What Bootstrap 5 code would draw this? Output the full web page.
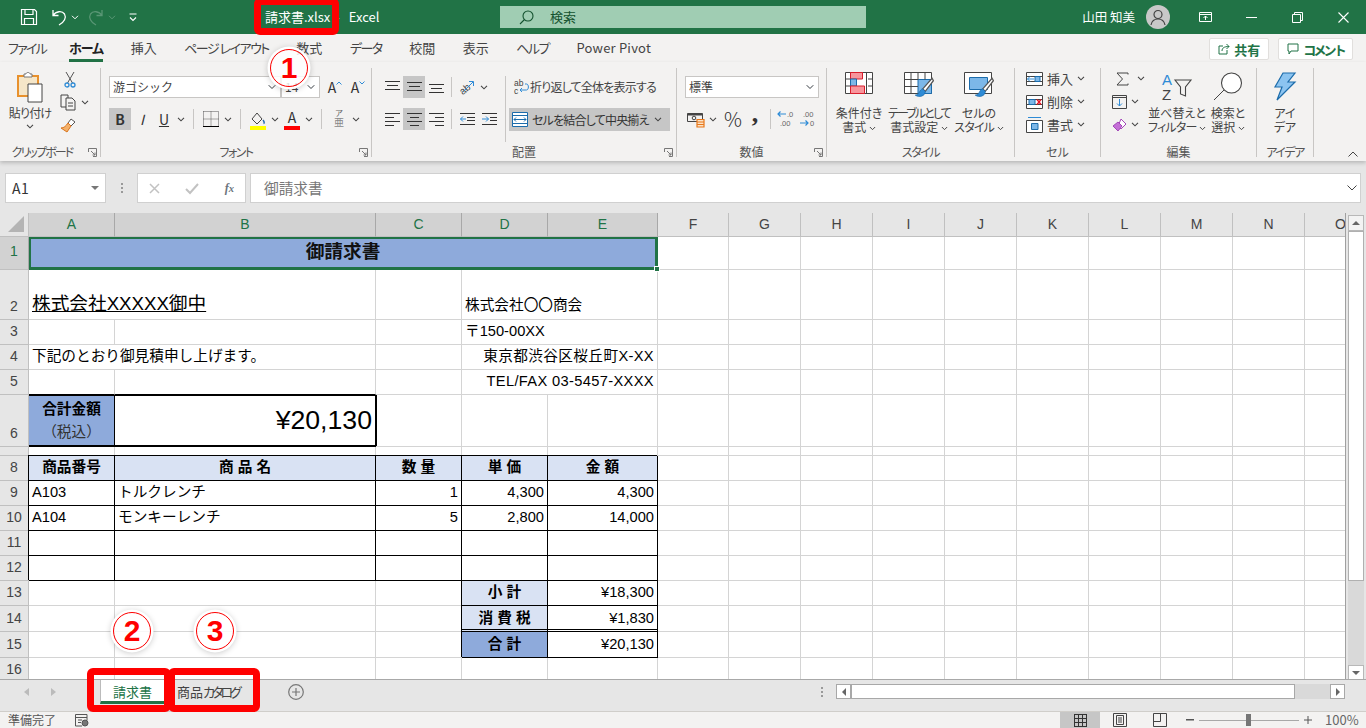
<!DOCTYPE html>
<html lang="ja">

<head>
    <meta charset="UTF-8">
    <title>請求書.xlsx - Excel</title>
    <link href="https://cdn.jsdelivr.net/npm/bootstrap@5.3.3/dist/css/bootstrap.min.css" rel="stylesheet">
    <style>
        html, body { height: 728px; overflow: hidden; }
        body { font-family: "Noto Sans CJK JP", "Liberation Sans", sans-serif; font-size: 12px; color: #444; background: #e6e6e6; }
        svg { display: block; flex-shrink: 0; overflow: visible; }
        .app { width: 1366px; height: 728px; overflow: hidden; font-feature-settings: "palt"; }
        .kana { letter-spacing: -1.5px; }
        .kana-s { letter-spacing: -.8px; }
        .kana-l { letter-spacing: -1.9px; }

        /* title bar */
        .xl-title { height: 34px; background: #217346; color: #fff; font-size: 13px; flex-shrink: 0; }
        .qat { width: 254px; flex-shrink: 0; padding-left: 20px; gap: 9px; }
        .qat-chev { margin-left: -5px; }
        .doc-name { width: 246px; flex-shrink: 0; padding-left: 11px; font-feature-settings: normal; }
        .doc-dash { margin: 0 6px 0 2px; opacity: .7; }
        .xl-search { width: 366px; height: 22px; background: #a0cdb3; color: #14522f; padding-left: 19px; gap: 16px; }
        .xl-user { font-size: 12.5px; margin-left: auto; }
        .xl-avatar { width: 24px; height: 24px; border-radius: 50%; background: #c8c8c8; margin: 0 12px 0 11px; overflow: hidden; }
        .win-btn { width: 46px; height: 34px; }

        /* ribbon */
        .tab-row { height: 28px; background: #f3f2f1; padding-left: 8px; gap: 27.5px; font-size: 13px; flex-shrink: 0; }
        .rb-tab { height: 28px; line-height: 28px; white-space: nowrap; }
        .tab-first { margin-right: -4.5px; letter-spacing: -1.75px; }
        .tab-pp { letter-spacing: .2px; }
        .rb-tab-on { font-weight: 700; color: #222; border-bottom: 3px solid #217346; letter-spacing: -1px; }
        .rb-share { height: 22px; padding: 0 8px; font-size: 13px; font-weight: 700; color: #217346; background: #fff; border: 1px solid #e1dfdd; border-radius: 2px; gap: 4px; line-height: 1; }
        .share-kana { letter-spacing: -2.8px; }
        .share-wrap { margin-left: auto; margin-right: 13px; gap: 9px; }
        .ribbon { height: 99px; background: #f3f2f1; padding-top: 6px; position: relative; z-index: 2; box-shadow: 0 2px 4px rgba(0, 0, 0, .2); flex-shrink: 0; }
        .rb-group { height: 89px; border-right: 1px solid #c8c6c4; position: relative; flex-shrink: 0; }
        .g-clip { width: 101px; } .g-font { width: 271px; } .g-align { width: 305px; } .g-num { width: 150px; }
        .g-style { width: 188px; } .g-cell { width: 86px; } .g-edit { width: 156px; } .g-idea { width: 57px; }
        .rb-body { height: 73px; }
        .rb-label { position: absolute; left: 0; right: 0; bottom: -3px; height: 16px; line-height: 16px; text-align: center; color: #555; }
        .label-clip { padding-right: 16px; }
        .launch { position: absolute; right: 3px; bottom: 0; }
        .rows { padding-top: 8px; gap: 10px; }
        .rb-row { height: 22px; }
        .ib { width: 22px; height: 22px; flex-shrink: 0; font-size: 14px; color: #333; }
        .ib-on { background: #c6c6c6; }
        .cv { width: 12px; height: 22px; flex-shrink: 0; }
        .rb-sep { width: 1px; height: 20px; background: #c8c6c4; margin: 1px 6px; flex-shrink: 0; }
        .sep-tight { margin: 1px 4px; }
        .xl-select { height: 22px; padding: 0 16px 0 3px; font-size: 12px; line-height: 20px; color: #444; border: 1px solid #c8c6c4; border-radius: 0; background-position: right 3px center; background-size: 10px 8px; box-shadow: none; }
        .sel-font { width: 172px; margin-left: 8px; }
        .sel-size { width: 39px; margin-left: 0; }
        .sel-num { width: 134px; }
        .grow-a { margin-left: 1px; }
        .grow-a svg { margin-bottom: 9px; }
        .big-btn { line-height: 14px; text-align: center; flex-shrink: 0; padding-top: 4px; white-space: nowrap; }
        .big-ico { height: 34px; }
        .small-col { width: 44px; }
        .small-row { height: 23px; }
        .cell-stack { margin-top: -1px; }
        .cell-row { height: 23px; padding-left: 11px; gap: 4px; font-size: 13px; white-space: nowrap; }
        .align-body { padding-left: 9px; }
        .align-left { width: 124px; }
        .wrap-row { gap: 1px; padding-left: 5px; color: #444; }
        .merge-btn { width: 161px; height: 23px; background: #c6c6c6; padding-left: 3px; gap: 4px; color: #333; }
        .g-rule { width: 1px; height: 66px; background: #c8c6c4; margin: 8px 3px 0 0; }
        .bar-a { line-height: 15px; font-size: 14px; text-align: center; }
        .bar-c { width: 16px; height: 4px; margin-top: 1px; }
        .bar-y { background: #ff0; } .bar-r { background: #f00; }
        .ruby-a { font-size: 8px; line-height: 9px; text-align: center; color: #666; }
        .ruby-b { font-size: 10px; line-height: 10px; text-align: center; color: #888; }
        .pct-glyph { font-size: 20px; font-weight: 300; margin-left: 3px; }
        .comma-glyph { font: 700 26px/14px "Liberation Serif", serif; padding-bottom: 10px; }

        /* formula bar */
        .fx-area { height: 52px; background: #e6e6e6; padding: 12px 5px 10px; flex-shrink: 0; }
        .fx-box { height: 30px; background: #fff; border: 1px solid #d0d0d0; }
        .fx-name { width: 101px; padding: 0 6px; font-size: 14px; color: #333; letter-spacing: .5px; font-feature-settings: normal; }
        .fx-dots { width: 31px; }
        .fx-btns { width: 109px; padding: 0 11px; }
        .fx-mark { font-family: "Liberation Serif", serif; }
        .fx-input { margin-left: 4px; flex: 1; padding: 0 3px 0 13px; color: #777; font-size: 14.67px; font-feature-settings: normal; }

        /* sheet */
        .sheet-area { height: 466px; flex-shrink: 0; }
        .sheet-clip { width: 1346px; height: 466px; overflow: hidden; background: #fff; border-right: 1px solid #a0a0a0; flex-shrink: 0; }
        .sheet { table-layout: fixed; width: 1377px; border-collapse: separate; border-spacing: 0; color: #000; font-family: "Liberation Sans", "Noto Sans CJK JP", sans-serif; font-size: 14.67px; font-feature-settings: normal; }
        .sheet td, .sheet th { border-right: 1px solid #d4d4d4; border-bottom: 1px solid #d4d4d4; padding: 0 3px 4px; line-height: 18px; white-space: nowrap; overflow: hidden; vertical-align: bottom; font-weight: 400; }
        .col-h { width: 29px; } .col-a { width: 86px; } .col-b { width: 261px; } .col-c { width: 86px; }
        .col-d { width: 86px; } .col-e { width: 110px; } .col-f { width: 71px; } .col-g { width: 72px; }
        .sheet th.hd { background: #e6e6e6; color: #444; text-align: center; font-size: 14px; padding: 0 0 4px; border-right-color: #c0c0c0; border-bottom-color: #c0c0c0; }
        .sheet th.hd-on { background: #d2d2d2; color: #217346; border-right-color: #a8a8a8; vertical-align: middle; }
        .sheet th.hd-corner { position: relative; }
        .sheet th.hd-col { vertical-align: middle; color: #444; padding-bottom: 2px; }
        .sheet th.hd-on.hd-col { color: #217346; }
        .r0 { height: 24px; } .r1 { height: 33px; } .r2 { height: 50px; } .r25 { height: 25px; } .r26 { height: 26px; } .r6 { height: 52px; } .r7 { height: 9px; }
        .sheet .r7 td, .sheet .r7 th { line-height: 0; padding: 0; }
        .sheet .r2 td.pad-up { padding-bottom: 5px; }
        .sheet td.title-cell { background: #8eaadb; font-size: 18.67px; font-weight: 700; text-align: center; vertical-align: middle; position: relative; box-shadow: inset 0 0 0 2px #217346; overflow: visible; border-color: #217346; color: #111; padding: 0 0 3px; }
        .fill-handle { position: absolute; right: -3px; bottom: -3px; width: 6px; height: 6px; background: #217346; border: 1px solid #fff; z-index: 2; }
        .big-name { font-size: 18.67px; text-decoration: underline; text-decoration-thickness: 1px; }
        .addr { letter-spacing: .35px; }
        .sheet td.bk { border-right-color: #000; border-bottom-color: #000; box-shadow: -1px -1px 0 #000; }
        .sheet td.bb { border-bottom-color: #000; }
        .sheet td.fill-l { background: #d9e2f3; font-weight: 700; text-align: center; }
        .sheet td.fill-d { background: #8eaadb; font-weight: 700; text-align: center; }
        .sheet td.dbl { border-bottom: 3px double #000; padding-bottom: 2px; }
        .sheet td.box-l { border-top: 1px solid #000; border-bottom: 2px solid #000; border-right-color: #000; line-height: 23px; padding-bottom: 1px; }
        .sheet td.box-r { border-top: 1px solid #000; border-bottom: 2px solid #000; border-right-color: #000; box-shadow: 1px 0 0 #000; font-size: 26.67px; line-height: 30px; vertical-align: middle; padding-bottom: 1px; }
        .soft-txt { font-weight: 400; color: #333; }

        /* scrollbars */
        .vscroll { width: 20px; padding: 2px 2px 0; }
        .vs-btn { height: 16px; background: #f3f3f3; border: 1px solid #b8b8b8; }
        .vs-btn-dn { background: #fff; }
        .vs-thumb { height: 350px; background: #fff; border: 1px solid #b0b0b0; }
        .vs-track { height: 84px; background: #d9d9d9; }

        /* sheet tabs */
        .tabs-bar { height: 33px; background: #e6e6e6; padding-left: 24px; border-top: 1px solid #a8a8a8; flex-shrink: 0; }
        .tab-nav { width: 76px; gap: 22px; height: 24px; }
        .sh-tab { height: 24px; width: 65px; text-align: center; line-height: 24px; font-size: 13px; }
        .sh-tab-on { background: #fff; color: #217346; border-left: 1px solid #bbb; border-right: 1px solid #bbb; border-bottom: 3px solid #217346; }
        .sh-tab-off { margin-left: 12px; width: 64px; color: #444; white-space: nowrap; text-align: left; }
        .tab-kana { letter-spacing: -3px; }
        .tab-add { margin-left: 47px; }
        .hs { margin-left: auto; margin-right: 21px; }
        .hs-dots { margin-right: 13px; }
        .hs-btn { width: 15px; height: 15px; background: #fff; border: 1px solid #a8a8a8; }
        .hs-thumb { width: 444px; height: 15px; background: #fff; border: 1px solid #a8a8a8; }
        .hs-track { width: 35px; height: 15px; background: #d9d9d9; }

        /* status bar */
        .status { height: 17px; background: #f3f2f1; padding-left: 8px; line-height: 16px; color: #555; flex-shrink: 0; border-top: 1px solid #d0ceca; position: relative; margin-top: -1px; }
        .macro-ico { margin-left: 19px; }
        .st-view { width: 40px; height: 17px; }
        .st-view-on { background: #c6c6c6; }
        .st-right { margin-left: auto; margin-right: 8px; }
        .st-minus { margin-left: 6px; }
        .st-zoom { width: 100px; height: 1px; background: #a8a8a8; margin: 0 5px; position: relative; }
        .st-knob { position: absolute; left: 47px; top: -6px; width: 5px; height: 12px; background: #767676; }
        .st-pct { width: 46px; padding-left: 13px; font-size: 13px; color: #666; }

        /* red marks laid over the screenshot */
        .mark-box { position: absolute; border: 7px solid #f00; border-radius: 6px; z-index: 5; }
        .mark-t { left: 254px; top: -2px; width: 85px; height: 37px; }
        .mark-s1 { left: 87px; top: 668px; width: 84px; height: 44px; }
        .mark-s2 { left: 168px; top: 668px; width: 92px; height: 44px; }
        .mark-num { position: absolute; width: 38px; height: 38px; border-radius: 50%; border: 1.5px solid #f00; background: rgba(255, 255, 255, .82); box-shadow: 0 0 0 2.5px #fff, 0 1px 6px 2px rgba(0, 0, 0, .22); color: #f00; font: 700 30px/35px "Liberation Sans", sans-serif; text-align: center; z-index: 6; }
        .mn-1 { left: 270px; top: 49px; }
        .mn-2 { left: 113px; top: 612px; }
        .mn-3 { left: 196px; top: 612px; }
    </style>
</head>

<body>
    <svg width="0" height="0" class="position-absolute">
        <symbol id="chev" viewBox="0 0 8 5"><path d="M1 .8 4 3.8 7 .8" fill="none" stroke="#444" stroke-width="1.1" /></symbol>
        <symbol id="launch" viewBox="0 0 9 9"><path d="M.5 4V.5H8.5V8.5H5M3 3 7 7M4.500 7H7V4.500" fill="none" stroke="#777" /></symbol>
        <symbol id="brush" viewBox="0 0 16 16"><path d="M14.500 1 7 9.500 9 11.500 15.500 3z" fill="#fff" stroke="#555" /><path d="M7 9.500C4 10 5 14 1 14.500 4 16.500 9 15.500 9 11.500z" fill="#2e8bd6" stroke="#1c6cab" stroke-width=".6" /></symbol>
    </svg>

    <div class="app d-flex flex-column position-relative">
        <!-- title bar -->
        <div class="xl-title d-flex align-items-center">
            <div class="qat d-flex align-items-center">
                <svg class="me-1" width="18" height="18" viewBox="0 0 18 18" fill="none" stroke="#fff" stroke-width="1.200"><path d="M1.500 1.500H14.500L16.500 3.500V16.500H1.500zM5 1.500V6.500H13V1.500M4.500 16.500V10.500H13.500V16.500" /></svg>
                <svg width="16" height="17" viewBox="0 0 16 17" fill="none" stroke="#fff" stroke-width="1.300"><path d="M2 1V6.500H7.500M2 6.500C5 2 11 1.500 13.500 5 15.500 8.500 13.500 13 8 16" /></svg>
                <svg class="qat-chev" width="8" height="5"><path d="M1 .8 4 3.800 7 .8" fill="none" stroke="#fff" /></svg>
                <svg class="opacity-25" width="16" height="17" viewBox="0 0 16 17" fill="none" stroke="#fff" stroke-width="1.300"><path d="M14 1V6.500H8.500M14 6.500C11 2 5 1.500 2.500 5 .5 8.500 2.500 13 8 16" /></svg>
                <svg class="qat-chev opacity-25" width="8" height="5"><path d="M1 .8 4 3.800 7 .8" fill="none" stroke="#fff" /></svg>
                <svg class="ms-1" width="8" height="9" viewBox="0 0 8 9" fill="none" stroke="#fff" stroke-width="1.100"><path d="M.5 1H7.500M1 4.500 4 7.500 7 4.500" /></svg>
            </div>
            <div class="doc-name text-nowrap">請求書.xlsx<span class="doc-dash"> - </span>Excel</div>
            <div class="xl-search d-flex align-items-center">
                <svg width="15" height="15" viewBox="0 0 15 15" fill="none" stroke="#14522f" stroke-width="1.100"><circle cx="9" cy="6" r="5" /><path d="M5.500 9.500 1 14" /></svg>
                <span>検索</span>
            </div>
            <span class="xl-user">山田 知美</span>
            <div class="xl-avatar d-flex justify-content-center align-items-center">
                <svg width="16" height="17" viewBox="0 0 16 17" fill="none" stroke="#444" stroke-width="1.200"><circle cx="8" cy="5.500" r="4" /><path d="M1 16C2 11 5 10 8 10S14 11 15 16" /></svg>
            </div>
            <div class="win-btn d-flex justify-content-center align-items-center">
                <svg width="13" height="10" viewBox="0 0 13 10" fill="none" stroke="#fff"><path d="M.5.5H12.500V9.500H.5zM.5 2.500H12.500M6.500 8V4M4.500 6 6.500 4 8.500 6" /></svg>
            </div>
            <div class="win-btn d-flex justify-content-center align-items-center">
                <svg width="11" height="1"><rect width="11" height="1" fill="#fff" /></svg>
            </div>
            <div class="win-btn d-flex justify-content-center align-items-center">
                <svg width="11" height="11" viewBox="0 0 11 11" fill="none" stroke="#fff"><path d="M.5 2.500H8.500V10.500H.5zM2.500 2.500V.5H10.500V8.500H8.500" /></svg>
            </div>
            <div class="win-btn d-flex justify-content-center align-items-center">
                <svg width="11" height="11" viewBox="0 0 11 11" fill="none" stroke="#fff" stroke-width="1.100"><path d="M.5.5 10.500 10.500M10.500.5.5 10.500" /></svg>
            </div>
        </div>

        <!-- ribbon tabs -->
        <div class="tab-row d-flex align-items-start">
            <span class="rb-tab tab-first">ファイル</span>
            <span class="rb-tab rb-tab-on">ホーム</span>
            <span class="rb-tab">挿入</span>
            <span class="rb-tab kana">ページ レイアウト</span>
            <span class="rb-tab">数式</span>
            <span class="rb-tab kana">データ</span>
            <span class="rb-tab">校閲</span>
            <span class="rb-tab">表示</span>
            <span class="rb-tab kana">ヘルプ</span>
            <span class="rb-tab tab-pp">Power Pivot</span>
            <div class="share-wrap d-flex align-items-center mt-1">
                <button class="btn rb-share d-flex align-items-center">
                    <svg width="12" height="12" viewBox="0 0 12 12" fill="none" stroke="#217346"><path d="M5 3H1V11H9V7M4 8C4 5 6 3.500 11 3.500M8.500 1 11 3.500 8.500 6" /></svg>共有
                </button>
                <button class="btn rb-share d-flex align-items-center">
                    <svg width="12" height="12" viewBox="0 0 12 12" fill="none" stroke="#217346"><path d="M1 1H11V8H4L2 11V8H1z" /></svg><span class="share-kana">コメント</span>
                </button>
            </div>
        </div>

        <!-- ribbon -->
        <div class="ribbon d-flex">
            <div class="rb-group g-clip">
                <div class="rb-body d-flex">
                    <div class="big-btn ms-2 kana-s" style="width:44px">
                        <div class="big-ico d-flex justify-content-center">
                            <svg width="28" height="32" viewBox="0 0 28 32"><path d="M2 4H22V24H2z" fill="#f5e6c8" stroke="#e8912d" stroke-width="2" /><path d="M8 4V2H10C10 0 14 0 14 2H16V5H8z" fill="#fff" stroke="#777" /><path d="M12 12H26V30H12z" fill="#fff" stroke="#444" /></svg>
                        </div>
                        貼り付け
                        <svg class="mx-auto mt-1" width="8" height="5"><use href="#chev" /></svg>
                    </div>
                    <div class="small-col">
                        <div class="small-row d-flex align-items-center ps-2">
                            <svg class="ms-1" width="12" height="17" viewBox="0 0 12 17" fill="none"><path d="M2 1 8.500 12M10 1 3.500 12" stroke="#555" /><circle cx="3" cy="14" r="2" stroke="#2e8bd6" stroke-width="1.300" /><circle cx="9" cy="14" r="2" stroke="#2e8bd6" stroke-width="1.300" /></svg>
                        </div>
                        <div class="small-row d-flex align-items-center ps-2">
                            <svg width="17" height="17" viewBox="0 0 17 17" fill="#f3f2f1" stroke="#444"><path d="M1 1H8V13H1z" /><path d="M6 4H12L15 7V16H6zM8 9H13M8 12H13" /></svg>
                            <svg class="ms-1" width="8" height="5"><use href="#chev" /></svg>
                        </div>
                        <div class="small-row d-flex align-items-center ps-2">
                            <svg width="16" height="15" viewBox="0 0 16 15"><path d="M11 1 15 4 11 8 8 5z" fill="#fff" stroke="#555" /><path d="M8 5 11 8 7 14 1 10C4 10 6 8 8 5z" fill="#f4b16a" stroke="#d9731a" /></svg>
                        </div>
                    </div>
                </div>
                <div class="rb-label label-clip kana-l">クリップボード</div>
                <svg class="launch" width="9" height="9"><use href="#launch" /></svg>
            </div>

            <div class="rb-group g-font">
                <div class="rb-body rows d-flex flex-column">
                    <div class="rb-row d-flex align-items-center">
                        <select class="form-select xl-select sel-font"><option>游ゴシック</option></select>
                        <select class="form-select xl-select sel-size"><option>14</option></select>
                        <div class="ib grow-a d-flex justify-content-center align-items-center ms-1">A<svg width="6" height="4"><path d="M.5 3.500 3 1 5.500 3.500" fill="none" stroke="#2e8bd6" /></svg></div>
                        <div class="ib grow-a d-flex justify-content-center align-items-center">A<svg width="6" height="4"><path d="M.5.5 3 3 5.500.5" fill="none" stroke="#2e8bd6" /></svg></div>
                    </div>
                    <div class="rb-row d-flex align-items-center ms-2">
                        <div class="ib ib-on fw-bold d-flex justify-content-center align-items-center">B</div>
                        <div class="ib fst-italic d-flex justify-content-center align-items-center">I</div>
                        <div class="ib text-decoration-underline d-flex justify-content-center align-items-center">U</div>
                        <div class="cv d-flex justify-content-center align-items-center"><svg width="8" height="5"><use href="#chev" /></svg></div>
                        <div class="rb-sep"></div>
                        <div class="ib d-flex justify-content-center align-items-center">
                            <svg width="16" height="16" viewBox="0 0 16 16" fill="none" stroke="#555" stroke-dasharray="1 1"><path d="M.5.5H15.500V15.500M.5.5V15.500M8 .5V15.500M.5 8H15.500" /><path d="M0 15.500H16" stroke="#000" stroke-dasharray="none" /></svg>
                        </div>
                        <div class="cv d-flex justify-content-center align-items-center"><svg width="8" height="5"><use href="#chev" /></svg></div>
                        <div class="rb-sep"></div>
                        <div class="ib d-flex flex-column align-items-center justify-content-end">
                            <svg width="14" height="13" viewBox="0 0 14 13" fill="none" stroke="#444"><path d="M6 1 1 7 6 12 11 7z" /><path d="M12 8C13.500 10 13.500 11 12.500 11.500" stroke="#2a6fb5" stroke-width="1.500" /></svg>
                            <div class="bar-c bar-y"></div>
                        </div>
                        <div class="cv d-flex justify-content-center align-items-center"><svg width="8" height="5"><use href="#chev" /></svg></div>
                        <div class="ib d-flex flex-column align-items-center justify-content-end">
                            <div class="bar-a">A</div>
                            <div class="bar-c bar-r"></div>
                        </div>
                        <div class="cv d-flex justify-content-center align-items-center"><svg width="8" height="5"><use href="#chev" /></svg></div>
                        <div class="rb-sep"></div>
                        <div class="ib">
                            <div class="ruby-a">ア</div>
                            <div class="ruby-b">亜</div>
                        </div>
                        <div class="cv d-flex justify-content-center align-items-center"><svg width="8" height="5"><use href="#chev" /></svg></div>
                    </div>
                </div>
                <div class="rb-label kana">フォント</div>
                <svg class="launch" width="9" height="9"><use href="#launch" /></svg>
            </div>

            <div class="rb-group g-align">
                <div class="rb-body align-body d-flex">
                    <div class="align-left rows d-flex flex-column">
                        <div class="rb-row d-flex align-items-center">
                            <div class="ib d-flex justify-content-center align-items-center"><svg width="15" height="14" viewBox="0 0 15 14" stroke="#333"><path d="M0 1.500H15M2 5.500H13M0 9.500H15" /></svg></div>
                            <div class="ib ib-on d-flex justify-content-center align-items-center"><svg width="15" height="14" viewBox="0 0 15 14" stroke="#333"><path d="M0 2.500H15M2 6.500H13M0 10.500H15" /></svg></div>
                            <div class="ib d-flex justify-content-center align-items-center"><svg width="15" height="14" viewBox="0 0 15 14" stroke="#333"><path d="M0 4.500H15M2 8.500H13M0 12.500H15" /></svg></div>
                            <div class="rb-sep sep-tight"></div>
                            <div class="ib d-flex justify-content-center align-items-center">
                                <svg width="16" height="16" viewBox="0 0 16 16" fill="none"><text x="0" y="14" transform="rotate(-40 5 10)" font-size="10" fill="#444" font-family="Liberation Sans">ab</text><path d="M4 13 14 3M10 2.500H14.500V7" stroke="#2e8bd6" /></svg>
                            </div>
                            <div class="cv d-flex justify-content-center align-items-center"><svg width="8" height="5"><use href="#chev" /></svg></div>
                        </div>
                        <div class="rb-row d-flex align-items-center">
                            <div class="ib d-flex justify-content-center align-items-center"><svg width="15" height="14" viewBox="0 0 15 14" stroke="#333"><path d="M0 1.500H15M0 5.500H9M0 9.500H15M0 13.500H9" /></svg></div>
                            <div class="ib ib-on d-flex justify-content-center align-items-center"><svg width="15" height="14" viewBox="0 0 15 14" stroke="#333"><path d="M0 1.500H15M3 5.500H12M0 9.500H15M3 13.500H12" /></svg></div>
                            <div class="ib d-flex justify-content-center align-items-center"><svg width="15" height="14" viewBox="0 0 15 14" stroke="#333"><path d="M0 1.500H15M6 5.500H15M0 9.500H15M6 13.500H15" /></svg></div>
                            <div class="rb-sep sep-tight"></div>
                            <div class="ib d-flex justify-content-center align-items-center"><svg width="15" height="12" viewBox="0 0 15 12" fill="none"><path d="M0 .5H15M7 4.500H15M7 7.500H15M0 11.500H15" stroke="#333" /><path d="M6 6H.5M3 3.500.5 6 3 8.500" stroke="#2e8bd6" /></svg></div>
                            <div class="ib d-flex justify-content-center align-items-center"><svg width="15" height="12" viewBox="0 0 15 12" fill="none"><path d="M0 .5H15M8 4.500H15M8 7.500H15M0 11.500H15" stroke="#333" /><path d="M0 6H6.500M4 3.500 6.500 6 4 8.500" stroke="#2e8bd6" /></svg></div>
                        </div>
                    </div>
                    <div class="g-rule"></div>
                    <div class="rows d-flex flex-column">
                        <div class="rb-row wrap-row d-flex align-items-center">
                            <svg width="15" height="16" viewBox="0 0 15 16" fill="none"><text x="0" y="7" font-size="8.500" fill="#444" font-family="Liberation Sans">ab</text><text x="0" y="15" font-size="8.500" fill="#444" font-family="Liberation Sans">c</text><path d="M11 5H12.500C15 5 15 11 12.500 11H6M8 9 6 11 8 13" stroke="#2e8bd6" /></svg>
                            <span class="text-nowrap kana-s">折り返して全体を表示する</span>
                        </div>
                        <div class="merge-btn d-flex align-items-center">
                            <svg width="16" height="15" viewBox="0 0 16 15" fill="#fff"><path d="M.5.5H15.500V14.500H.5z" stroke="#1c6cab" /><path d="M.5 3.500H15.500M.5 11.500H15.500" stroke="#1c6cab" /><path d="M2 7.500H14M4 5.500 2 7.500 4 9.500M12 5.500 14 7.500 12 9.500" stroke="#1c6cab" fill="none" /></svg>
                            <span class="text-nowrap kana-s">セルを結合して中央揃え</span>
                            <svg class="ms-auto me-2" width="8" height="5"><use href="#chev" /></svg>
                        </div>
                    </div>
                </div>
                <div class="rb-label">配置</div>
                <svg class="launch" width="9" height="9"><use href="#launch" /></svg>
            </div>

            <div class="rb-group g-num">
                <div class="rb-body rows d-flex flex-column">
                    <div class="rb-row d-flex align-items-center">
                        <select class="form-select xl-select sel-num ms-2"><option>標準</option></select>
                    </div>
                    <div class="rb-row d-flex align-items-center ms-2">
                        <div class="ib d-flex justify-content-center align-items-center">
                            <svg width="18" height="17" viewBox="0 0 18 17" fill="none"><path d="M.5 2.500H15.500V10.500H.5z" stroke="#444" /><path d="M.5 2.500H15.500V4.500H.5z" fill="#444" /><circle cx="7" cy="7" r="1.800" stroke="#444" /><path d="M10 8.500H17V16H10z" fill="#fbe3c7" stroke="#e8771a" stroke-width="1.200" /><path d="M10 11H17M10 13.500H17" stroke="#e8771a" /></svg>
                        </div>
                        <div class="cv d-flex justify-content-center align-items-center"><svg width="8" height="5"><use href="#chev" /></svg></div>
                        <div class="ib pct-glyph d-flex justify-content-center align-items-center">%</div>
                        <div class="ib comma-glyph d-flex justify-content-center align-items-center">,</div>
                        <div class="rb-sep sep-tight"></div>
                        <div class="ib d-flex justify-content-center align-items-center">
                            <svg width="18" height="18" viewBox="0 0 18 18" fill="none"><path d="M9 4H1M3.500 1.500 1 4 3.500 6.500" stroke="#2e8bd6" stroke-width="1.200" /><text x="10" y="7" font-size="7.500" fill="#666" font-family="Liberation Sans">.0</text><text x="3" y="16" font-size="7.500" fill="#666" font-family="Liberation Sans">.00</text></svg>
                        </div>
                        <div class="ib d-flex justify-content-center align-items-center">
                            <svg width="18" height="18" viewBox="0 0 18 18" fill="none"><text x="4" y="7" font-size="7.500" fill="#666" font-family="Liberation Sans">.00</text><path d="M1 13H9M6.500 10.500 9 13 6.500 15.500" stroke="#2e8bd6" stroke-width="1.200" /><text x="11" y="16" font-size="7.500" fill="#666" font-family="Liberation Sans">0</text></svg>
                        </div>
                    </div>
                </div>
                <div class="rb-label">数値</div>
                <svg class="launch" width="9" height="9"><use href="#launch" /></svg>
            </div>

            <div class="rb-group g-style">
                <div class="rb-body d-flex ps-1">
                    <div class="big-btn" style="width:56px">
                        <div class="big-ico d-flex justify-content-center">
                            <svg width="28" height="22" viewBox="0 0 28 22" fill="#fff" stroke="#444"><path d="M.5.5H27.500V21.500H.5z" /><path d="M5.500.5H17.500V7H5.500z" fill="#f8959c" stroke="#d81e2c" /><path d="M5.500 7H11.500V14H5.500z" fill="#7cb7e8" stroke="#1c6cab" /><path d="M5.500 14H19.500V21.500H5.500z" fill="#f8959c" stroke="#d81e2c" /><path d="M.5 7H5M.5 14H5M21.500.5V21.500M23 7H27.500M23 14H27.500" fill="none" /></svg>
                        </div>
                        条件付き<br>書式 <svg class="d-inline" width="7" height="5"><use href="#chev" /></svg>
                    </div>
                    <div class="big-btn" style="width:64px">
                        <div class="big-ico d-flex justify-content-center">
                            <svg width="30" height="26" viewBox="0 0 30 26" fill="#fff" stroke="#444"><path d="M.5.5H27.500V21.500H.5z" /><path d="M14 7.500H27.500V21.500H14z" fill="#7cb7e8" stroke="#1c6cab" /><path d="M.5 7.500H14M.5 14.500H14M7 .5V21.500M14 .5V7.500M21 .5V7.500" fill="none" /><svg x="10" y="4" width="20" height="22"><use href="#brush" /></svg></svg>
                        </div>
                        <span class="kana-l">テーブルとして</span><br>書式設定 <svg class="d-inline" width="7" height="5"><use href="#chev" /></svg>
                    </div>
                    <div class="big-btn" style="width:56px">
                        <div class="big-ico d-flex justify-content-center">
                            <svg width="30" height="26" viewBox="0 0 30 26" fill="#fff" stroke="#444"><path d="M.5.5H27.500V21.500H.5z" /><path d="M5.500 5.500H23.500V17.500H5.500z" fill="#7cb7e8" stroke="#1c6cab" /><svg x="10" y="4" width="20" height="22"><use href="#brush" /></svg></svg>
                        </div>
                        セルの<br><span class="kana-s">スタイル</span> <svg class="d-inline" width="7" height="5"><use href="#chev" /></svg>
                    </div>
                </div>
                <div class="rb-label kana">スタイル</div>
            </div>

            <div class="rb-group g-cell">
                <div class="rb-body cell-stack">
                    <div class="cell-row d-flex align-items-center">
                        <svg width="17" height="14" viewBox="0 0 17 14" fill="#fff" stroke="#444"><path d="M.5.5H16.500V13.500H.5zM.5 4.500H16.500M.5 9.500H16.500" /><path d="M9 4.500H14V9.500H9z" fill="#7cb7e8" stroke="#1c6cab" /><path d="M8 7H1.500M4 4.500 1.500 7 4 9.500" fill="none" stroke="#2e8bd6" /></svg>
                        <span>挿入</span>
                        <svg class="ms-auto me-3" width="8" height="5"><use href="#chev" /></svg>
                    </div>
                    <div class="cell-row d-flex align-items-center">
                        <svg width="17" height="14" viewBox="0 0 17 14" fill="#fff" stroke="#444"><path d="M.5.5H16.500V13.500H.5zM.5 4.500H16.500M.5 9.500H16.500" /><path d="M3 4.500H9V9.500H3z" fill="#7cb7e8" stroke="#1c6cab" /><path d="M11 4.500 15 9.500M15 4.500 11 9.500" stroke="#e81123" stroke-width="1.300" /></svg>
                        <span>削除</span>
                        <svg class="ms-auto me-3" width="8" height="5"><use href="#chev" /></svg>
                    </div>
                    <div class="cell-row d-flex align-items-center">
                        <svg width="17" height="16" viewBox="0 0 17 16" fill="#fff" stroke="#444"><path d="M.5 3.500H16.500V15.500H.5z" /><path d="M5.500 6.500H12V12.500H5.500z" fill="#7cb7e8" stroke="#1c6cab" /><path d="M2 .5H15" stroke="#2e8bd6" fill="none" /></svg>
                        <span>書式</span>
                        <svg width="8" height="5"><use href="#chev" /></svg>
                    </div>
                </div>
                <div class="rb-label">セル</div>
            </div>

            <div class="rb-group g-edit">
                <div class="rb-body d-flex">
                    <div class="cell-stack" style="width:47px">
                        <div class="cell-row d-flex align-items-center">
                            <svg class="mx-1" width="13" height="14" viewBox="0 0 13 14" fill="none" stroke="#444"><path d="M12 2.500V1H1L6.500 7 1 13H12V11.500" /></svg>
                            <svg width="8" height="5"><use href="#chev" /></svg>
                        </div>
                        <div class="cell-row d-flex align-items-center">
                            <svg width="15" height="14" viewBox="0 0 15 14" fill="none"><path d="M.5.5H14.500V13.500H.5zM.5 2.500H14.500" stroke="#444" /><path d="M7.500 4V11M5 8.500 7.500 11 10 8.500" stroke="#2e8bd6" /></svg>
                            <svg width="8" height="5"><use href="#chev" /></svg>
                        </div>
                        <div class="cell-row d-flex align-items-center">
                            <svg width="15" height="14" viewBox="0 0 15 14"><path d="M9 1 14 6 9 11 6 8z" fill="#fff" stroke="#a347b8" /><path d="M6 4 10 8 6 13 1 8z" fill="#c36fd6" stroke="#a347b8" /></svg>
                            <svg width="8" height="5"><use href="#chev" /></svg>
                        </div>
                    </div>
                    <div class="big-btn" style="width:58px">
                        <div class="big-ico d-flex justify-content-center">
                            <svg width="30" height="29" viewBox="0 0 30 29" fill="none"><text x="0" y="13" font-size="15" fill="#2e8bd6" font-family="Liberation Sans">A</text><text x="0" y="28" font-size="15" fill="#444" font-family="Liberation Sans">Z</text><path d="M13 8H29L23.500 15V24L18.500 22V15z" stroke="#444" stroke-width="1.100" /></svg>
                        </div>
                        並べ替えと<br><span class="kana-s">フィルター</span> <svg class="d-inline" width="7" height="5"><use href="#chev" /></svg>
                    </div>
                    <div class="big-btn" style="width:44px">
                        <div class="big-ico d-flex justify-content-center">
                            <svg width="30" height="29" viewBox="0 0 30 29" fill="#fff" stroke="#444"><circle cx="18.500" cy="11" r="10" stroke-width="1.100" /><path d="M11 18 1 28" /></svg>
                        </div>
                        検索と<br>選択 <svg class="d-inline" width="7" height="5"><use href="#chev" /></svg>
                    </div>
                </div>
                <div class="rb-label">編集</div>
            </div>

            <div class="rb-group g-idea">
                <div class="rb-body">
                    <div class="big-btn">
                        <div class="big-ico d-flex justify-content-center">
                            <svg width="22" height="29" viewBox="0 0 22 29"><path d="M9 1H21L14 10H21L3 28 8 15H1z" fill="#8cc4f0" stroke="#1c6cab" stroke-width="1.200" /></svg>
                        </div>
                        アイ<br>デア
                    </div>
                </div>
                <div class="rb-label kana">アイデア</div>
            </div>

            <div class="flex-grow-1 d-flex justify-content-end align-items-end">
                <svg class="me-2 mb-1" width="10" height="6" viewBox="0 0 10 6" fill="none" stroke="#444"><path d="M.5 5.500 5 1 9.500 5.500" /></svg>
            </div>
        </div>

        <!-- formula bar -->
        <div class="fx-area d-flex">
            <div class="fx-box fx-name d-flex align-items-center justify-content-between">
                A1
                <svg width="8" height="4" viewBox="0 0 8 4"><path d="M0 0H8L4 4z" fill="#777" /></svg>
            </div>
            <div class="fx-dots d-flex justify-content-center align-items-center">
                <svg width="2" height="10" viewBox="0 0 2 10" fill="#999"><rect width="2" height="2" /><rect y="4" width="2" height="2" /><rect y="8" width="2" height="2" /></svg>
            </div>
            <div class="fx-box fx-btns d-flex align-items-center justify-content-between">
                <svg width="11" height="11" viewBox="0 0 11 11" fill="none" stroke="#c2c2c2" stroke-width="1.500"><path d="M1 1 10 10M10 1 1 10" /></svg>
                <svg width="14" height="11" viewBox="0 0 14 11" fill="none" stroke="#c2c2c2" stroke-width="2"><path d="M1 6 5 10 13 1" /></svg>
                <span class="fx-mark fst-italic fw-bold text-secondary">f<small>x</small></span>
            </div>
            <div class="fx-box fx-input d-flex align-items-center justify-content-between">
                御請求書
                <svg width="10" height="6" viewBox="0 0 10 6" fill="none" stroke="#444"><path d="M.5.5 5 5 9.500.5" /></svg>
            </div>
        </div>

        <!-- sheet -->
        <div class="sheet-area d-flex">
            <div class="sheet-clip">
                <table class="sheet" id="sheet">
                    <colgroup>
                        <col class="col-h"><col class="col-a"><col class="col-b"><col class="col-c"><col class="col-d"><col class="col-e"><col class="col-f">
                        <col class="col-g"><col class="col-g"><col class="col-g"><col class="col-g"><col class="col-g"><col class="col-g"><col class="col-g"><col class="col-g"><col class="col-g">
                    </colgroup>
                    <tr class="r0">
                        <th class="hd hd-corner"><svg class="position-absolute bottom-0 end-0 me-1 mb-1" width="16" height="16"><path d="M16 0V16H0z" fill="#b4b4b4" /></svg></th>
                        <th class="hd hd-col hd-on">A</th><th class="hd hd-col hd-on">B</th><th class="hd hd-col hd-on">C</th><th class="hd hd-col hd-on">D</th><th class="hd hd-col hd-on">E</th>
                        <th class="hd hd-col">F</th><th class="hd hd-col">G</th><th class="hd hd-col">H</th><th class="hd hd-col">I</th><th class="hd hd-col">J</th><th class="hd hd-col">K</th><th class="hd hd-col">L</th><th class="hd hd-col">M</th><th class="hd hd-col">N</th><th class="hd hd-col">O</th>
                    </tr>
                    <tr class="r1"><th class="hd hd-on">1</th><td colspan="5" class="title-cell">御請求書<span class="fill-handle"></span></td></tr>
                    <tr class="r2"><th class="hd">2</th><td colspan="2" class="pad-up"><span class="big-name">株式会社XXXXX御中</span></td><td></td><td colspan="2" class="pad-up">株式会社〇〇商会</td></tr>
                    <tr class="r25"><th class="hd">3</th><td></td><td></td><td></td><td colspan="2">〒150-00XX</td></tr>
                    <tr class="r25"><th class="hd">4</th><td colspan="2">下記のとおり御見積申し上げます。</td><td></td><td colspan="2" class="addr text-end">東京都渋谷区桜丘町X-XX</td></tr>
                    <tr class="r25"><th class="hd">5</th><td class="bb"></td><td class="bb"></td><td></td><td colspan="2" class="addr text-end">TEL/FAX 03-5457-XXXX</td></tr>
                    <tr class="r6"><th class="hd">6</th><td class="box-l fill-d">合計金額<br><span class="soft-txt">（税込）</span></td><td class="box-r text-end">¥20,130</td><td></td><td></td><td></td></tr>
                    <tr class="r7"><th class="hd"></th><td></td><td></td><td></td><td></td><td></td></tr>
                    <tr class="r25"><th class="hd">8</th><td class="bk fill-l">商品番号</td><td class="bk fill-l">商 品 名</td><td class="bk fill-l">数 量</td><td class="bk fill-l">単 価</td><td class="bk fill-l">金 額</td></tr>
                    <tr class="r25"><th class="hd">9</th><td class="bk">A103</td><td class="bk">トルクレンチ</td><td class="bk text-end">1</td><td class="bk text-end">4,300</td><td class="bk text-end">4,300</td></tr>
                    <tr class="r25"><th class="hd">10</th><td class="bk">A104</td><td class="bk">モンキーレンチ</td><td class="bk text-end">5</td><td class="bk text-end">2,800</td><td class="bk text-end">14,000</td></tr>
                    <tr class="r25"><th class="hd">11</th><td class="bk"></td><td class="bk"></td><td class="bk"></td><td class="bk"></td><td class="bk"></td></tr>
                    <tr class="r25"><th class="hd">12</th><td class="bk"></td><td class="bk"></td><td class="bk"></td><td class="bk"></td><td class="bk"></td></tr>
                    <tr class="r25"><th class="hd">13</th><td></td><td></td><td></td><td class="bk fill-l">小 計</td><td class="bk text-end">¥18,300</td></tr>
                    <tr class="r26"><th class="hd">14</th><td></td><td></td><td></td><td class="bk fill-l dbl">消 費 税</td><td class="bk text-end dbl">¥1,830</td></tr>
                    <tr class="r26"><th class="hd">15</th><td></td><td></td><td></td><td class="bk fill-d">合 計</td><td class="bk text-end">¥20,130</td></tr>
                    <tr class="r25"><th class="hd">16</th><td></td><td></td><td></td><td></td><td></td></tr>
                </table>
            </div>
            <div class="vscroll flex-grow-1">
                <div class="vs-btn d-flex justify-content-center align-items-center"><svg width="8" height="4" viewBox="0 0 8 4"><path d="M4 0 8 4H0z" fill="#666" /></svg></div>
                <div class="vs-thumb"></div>
                <div class="vs-track"></div>
                <div class="vs-btn vs-btn-dn d-flex justify-content-center align-items-center"><svg width="8" height="4" viewBox="0 0 8 4"><path d="M0 0H8L4 4z" fill="#666" /></svg></div>
            </div>
        </div>

        <!-- sheet tabs -->
        <div class="tabs-bar d-flex align-items-start">
            <div class="tab-nav d-flex align-items-center">
                <svg width="5" height="8" viewBox="0 0 5 8"><path d="M5 0V8L0 4z" fill="#bbb" /></svg>
                <svg width="5" height="8" viewBox="0 0 5 8"><path d="M0 0V8L5 4z" fill="#bbb" /></svg>
            </div>
            <div class="sh-tab sh-tab-on">請求書</div>
            <div class="sh-tab sh-tab-off">商品<span class="tab-kana">カタログ</span></div>
            <svg class="tab-add mt-1" width="16" height="16" viewBox="0 0 16 16" fill="none" stroke="#777" stroke-width="1.200"><circle cx="8" cy="8" r="7.300" /><path d="M8 4V12M4 8H12" /></svg>
            <div class="hs d-flex align-items-center mt-1">
                <svg class="hs-dots" width="2" height="10" viewBox="0 0 2 10" fill="#999"><rect width="2" height="2" /><rect y="4" width="2" height="2" /><rect y="8" width="2" height="2" /></svg>
                <div class="hs-btn d-flex justify-content-center align-items-center"><svg width="4" height="8" viewBox="0 0 4 8"><path d="M4 0V8L0 4z" fill="#666" /></svg></div>
                <div class="hs-thumb"></div>
                <div class="hs-track"></div>
                <div class="hs-btn d-flex justify-content-center align-items-center"><svg width="4" height="8" viewBox="0 0 4 8"><path d="M0 0V8L4 4z" fill="#666" /></svg></div>
            </div>
        </div>

        <!-- status bar -->
        <div class="status d-flex align-items-center">
            <span>準備完了</span>
            <svg class="macro-ico" width="14" height="13" viewBox="0 0 14 13" fill="none" stroke="#555"><path d="M7 12H.5V.5H12V6M.5 3.500H12M3 6H7M3 8.500H6" /><circle cx="10" cy="9" r="3" fill="#777" /></svg>
            <div class="st-right d-flex align-items-center">
                <div class="st-view st-view-on d-flex justify-content-center align-items-center">
                    <svg width="13" height="13" viewBox="0 0 13 13" fill="#333"><path d="M0 0H13V13H0zM1 1V4H4V1zM5 1V4H8V1zM9 1V4H12V1zM1 5V8H4V5zM5 5V8H8V5zM9 5V8H12V5zM1 9V12H4V9zM5 9V12H8V9zM9 9V12H12V9z" fill-rule="evenodd" /></svg>
                </div>
                <div class="st-view d-flex justify-content-center align-items-center">
                    <svg width="14" height="14" viewBox="0 0 14 14" fill="none" stroke="#444"><path d="M.5.5H13.500V13.500H.5zM3.500 2.500H10.500V11.500H3.500zM5 5H9M5 7H9M5 9H9" /></svg>
                </div>
                <div class="st-view d-flex justify-content-center align-items-center">
                    <svg width="14" height="14" viewBox="0 0 14 14" fill="none" stroke="#444"><path d="M.5.5H13.500V13.500H.5zM.5 8.500H7.500V.5" /></svg>
                </div>
                <svg class="st-minus" width="8" height="2"><rect width="8" height="1.500" fill="#555" /></svg>
                <div class="st-zoom"><div class="st-knob"></div></div>
                <svg width="8" height="8" viewBox="0 0 8 8" stroke="#555"><path d="M0 4H8M4 0V8" /></svg>
                <div class="st-pct text-nowrap">100%</div>
            </div>
        </div>

        <!-- red marks -->
        <div class="mark-box mark-t"></div>
        <div class="mark-box mark-s1"></div>
        <div class="mark-box mark-s2"></div>
        <div class="mark-num mn-1">1</div>
        <div class="mark-num mn-2">2</div>
        <div class="mark-num mn-3">3</div>
    </div>

    <script>
        // 空白セル（F列以降）は行ごとに足す
        document.querySelectorAll('#sheet tr:not(.r0)').forEach(function (tr) {
            for (let i = 0; i < 10; i++) {
                tr.appendChild(document.createElement('td'));
            }
        });
    </script>
    <script src="https://cdn.jsdelivr.net/npm/bootstrap@5.3.3/dist/js/bootstrap.bundle.min.js"></script>
</body>

</html>
